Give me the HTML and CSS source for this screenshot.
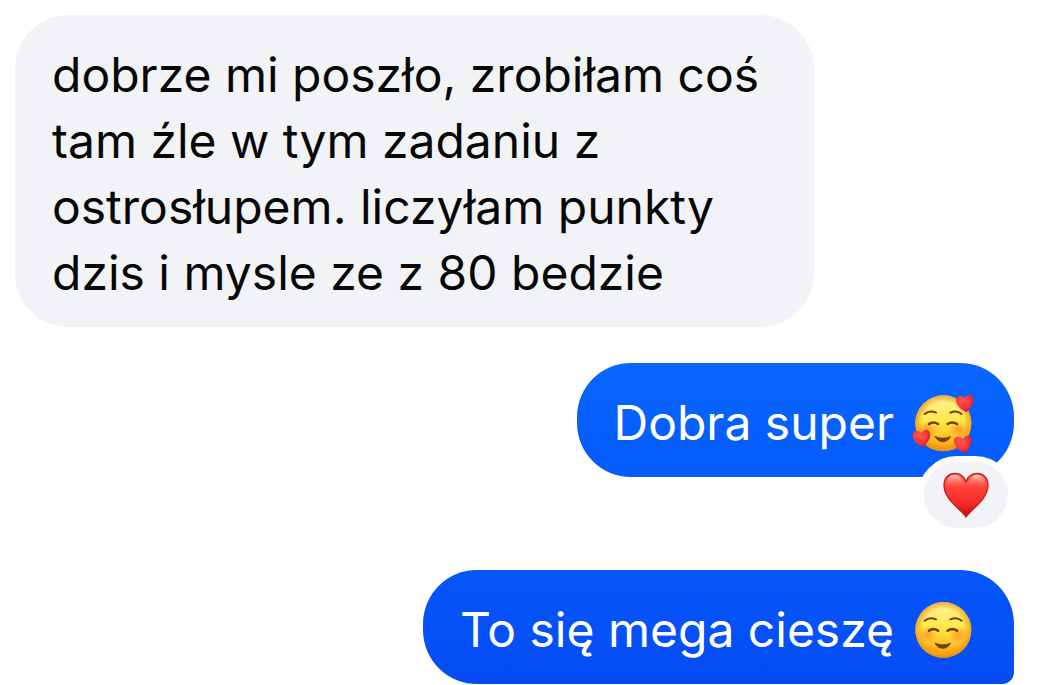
FILE: index.html
```html
<!DOCTYPE html>
<html lang="pl">
<head>
<meta charset="utf-8">
<meta name="viewport" content="width=device-width, initial-scale=1">
<title>Czat</title>
<link rel="stylesheet" href="styles.css">
</head>
<body>
<main class="chat">
  <p class="bubble received">dobrze mi poszło, zrobiłam coś tam źle w tym zadaniu z ostrosłupem. liczyłam punkty dzis i mysle ze z 80 bedzie</p>

  <div class="bubble sent reacted">
    <span>Dobra super</span>
    <svg class="emoji" viewBox="66 99 186 180" role="img" aria-label="Uśmiechnięta twarz z serduszkami">
      <defs>
        <linearGradient id="skin" x1="0" y1="0" x2="0" y2="1">
          <stop offset="0" stop-color="#fff0a0"/>
          <stop offset=".12" stop-color="#fff08a"/>
          <stop offset=".5" stop-color="#ffe63f"/>
          <stop offset=".8" stop-color="#fdb823"/>
          <stop offset="1" stop-color="#f59b16"/>
        </linearGradient>
        <radialGradient id="rim">
          <stop offset=".74" stop-color="#f08c00" stop-opacity="0"/>
          <stop offset="1" stop-color="#ea8a08" stop-opacity=".7"/>
        </radialGradient>
        <radialGradient id="cheek">
          <stop offset="0" stop-color="#ff7420" stop-opacity=".65"/>
          <stop offset="1" stop-color="#ff8a20" stop-opacity="0"/>
        </radialGradient>
        <radialGradient id="heart-fill" cx=".4" cy=".35" r=".7">
          <stop offset="0" stop-color="#ff5a50"/>
          <stop offset=".6" stop-color="#f93538"/>
          <stop offset="1" stop-color="#c91528"/>
        </radialGradient>
        <g id="features" fill="none" stroke="#76400c" stroke-linecap="round">
          <path stroke-width="6" d="M104 162Q119 150 138 158M181 158Q200 150 215 162"/>
          <path stroke-width="8" d="M117 192Q130 183 144 192M173 192Q187 183 201 192"/>
          <path fill="#76400c" stroke-width="3" stroke-linejoin="round" d="M136 230Q158 240 181 230Q175 244 158 245Q142 244 136 230Z"/>
        </g>
        <path id="mini-heart" fill="url(#heart-fill)" d="M5 51C-9 44-26 31-26 14C-26 0-8-3 0 9C5-4 22-6 26 8C30 25 14 42 5 51Z"/>
      </defs>
      <circle cx="160" cy="190" r="84" fill="url(#skin)"/>
      <circle cx="160" cy="190" r="84" fill="url(#rim)"/>
      <ellipse cx="112" cy="208" rx="32" ry="25" fill="url(#cheek)"/>
      <ellipse cx="207" cy="208" rx="32" ry="25" fill="url(#cheek)"/>
      <use href="#features"/>
      <use href="#mini-heart" x="224" y="106"/>
      <use href="#mini-heart" x="94" y="211"/>
      <use href="#mini-heart" x="218" y="229"/>
    </svg>
    <button class="reaction" type="button" aria-label="Reakcja: serce">
      <svg class="heart" viewBox="0 0 138 138" aria-hidden="true">
        <defs>
          <linearGradient id="red" x1="0" y1="0" x2="0" y2="1">
            <stop offset="0" stop-color="#ff6758"/>
            <stop offset=".35" stop-color="#ff4138"/>
            <stop offset=".7" stop-color="#f42a26"/>
            <stop offset="1" stop-color="#b90e12"/>
          </linearGradient>
          <linearGradient id="shine" x1="0" y1="0" x2="0" y2="1">
            <stop offset="0" stop-color="#ffd8d2" stop-opacity=".95"/>
            <stop offset="1" stop-color="#ff6758" stop-opacity="0"/>
          </linearGradient>
        </defs>
        <path fill="url(#red)" stroke="#c91b1b" stroke-width="4" d="M69 135C54 111 3 83 3 39C3 17 18 4 36 4C51 4 63 13 69 29C75 13 87 4 102 4C120 4 135 17 135 39C135 83 84 111 69 135Z"/>
        <path fill="url(#shine)" d="M10 36C12 18 23 9 36 9C49 9 59 20 62 38C47 46 25 46 10 36ZM76 38C79 20 89 9 102 9C115 9 126 18 128 36C113 46 91 46 76 38Z"/>
      </svg>
    </button>
  </div>

  <div class="bubble sent last">
    <span>To się mega cieszę</span>
    <svg class="emoji" viewBox="66 100 186 180" role="img" aria-label="Uśmiechnięta twarz">
      <circle cx="160" cy="190" r="84" fill="url(#skin)"/>
      <circle cx="160" cy="190" r="84" fill="url(#rim)"/>
      <ellipse cx="112" cy="203" rx="32" ry="25" fill="url(#cheek)"/>
      <ellipse cx="207" cy="203" rx="32" ry="25" fill="url(#cheek)"/>
      <use href="#features"/>
    </svg>
  </div>
</main>
</body>
</html>
```
FILE: styles.css
```css
* {
  box-sizing: border-box;
}

body {
  margin: 0;
  background: #fff;
  color: #080809;
  font: 48px/66px Inter, "Liberation Sans", sans-serif;
}

.chat {
  display: flex;
  flex-direction: column;
  padding: 15px 24px 1px 15px;
}

.bubble {
  margin: 0;
  padding: 27px 40px 21px 37px;
  border-radius: 54px;
}

.received {
  align-self: flex-start;
  max-width: 80%;
  background: #f1f3f7;
}

.sent {
  position: relative;
  display: flex;
  align-items: center;
  gap: 18px;
  align-self: flex-end;
  margin-top: 36px;
  background: linear-gradient(#0866ff, #055bfc);
  color: #fff;
}

.reacted {
  margin-bottom: 57px;
}

.last {
  border-bottom-right-radius: 12px;
  background: linear-gradient(#0557fa, #064bf5);
}

.emoji {
  flex: none;
  width: 62px;
  height: 60px;
}

.reaction {
  position: absolute;
  right: 0;
  bottom: -57px;
  display: flex;
  align-items: center;
  justify-content: center;
  width: 96px;
  height: 78px;
  padding: 0;
  border: 6px solid #fff;
  border-radius: 39px;
  background: #f1f3f7;
}

.heart {
  width: 46px;
  height: 46px;
}
```
